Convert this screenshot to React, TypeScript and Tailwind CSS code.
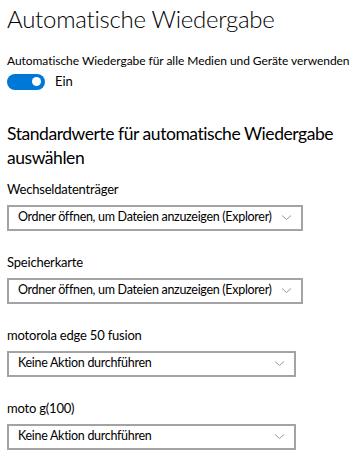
import React from "react";

const Chevron = () => (
  <svg width="11" height="7" viewBox="0 0 11 7" className="shrink-0">
    <path d="M1 1.5 L5.5 5.5 L10 1.5" fill="none" stroke="#999999" strokeWidth="1" />
  </svg>
);

interface DropdownProps {
  label: string;
  value: string;
  width: string;
}

const Dropdown: React.FC<DropdownProps> = ({ label, value, width }) => (
  <div className="flex flex-col">
    <div className="text-[13px] tracking-[-0.2px] leading-[18px] text-black">{label}</div>
    <div
      className={`mt-[7px] h-[26px] ${width} border-2 border-[#a3a3a3] flex items-center justify-between pl-[9px] pr-[9px]`}
    >
      <span className="text-[12.5px] tracking-[-0.3px] text-black whitespace-nowrap">{value}</span>
      <Chevron />
    </div>
  </div>
);

export default function App() {
  const items = [
    { label: "Wechseldatenträger", value: "Ordner öffnen, um Dateien anzuzeigen (Explorer)", width: "w-[296px]" },
    { label: "Speicherkarte", value: "Ordner öffnen, um Dateien anzuzeigen (Explorer)", width: "w-[296px]" },
    { label: "motorola edge 50 fusion", value: "Keine Aktion durchführen", width: "w-[289px]" },
    { label: "moto g(100)", value: "Keine Aktion durchführen", width: "w-[289px]" },
  ];

  return (
    <div className="w-[350px] h-[458px] bg-white overflow-hidden pl-[7px] font-['Lato',sans-serif] text-black">
      <h1 className="text-[24px] tracking-[-0.25px] font-light leading-[34px] pt-[2px] whitespace-nowrap">
        Automatische Wiedergabe
      </h1>
      <div className="mt-[16px] text-[12px] tracking-[-0.05px] leading-[18px] whitespace-nowrap">
        Automatische Wiedergabe für alle Medien und Geräte verwenden
      </div>
      <div className="mt-[2px] flex items-center gap-[10px]">
        <div className="w-[38px] h-[16px] rounded-full bg-[#0078d7] flex items-center justify-end pr-[4px]">
          <div className="w-[9px] h-[9px] rounded-full bg-white" />
        </div>
        <span className="text-[13px]">Ein</span>
      </div>
      <h2 className="mt-[30px] text-[17.5px] tracking-[-0.45px] leading-[24px] w-[343px]">
        Standardwerte für automatische Wiedergabe auswählen
      </h2>
      <div className="mt-[10px] flex flex-col gap-[22px]">
        {items.map((item) => (
          <Dropdown key={item.label} label={item.label} value={item.value} width={item.width} />
        ))}
      </div>
    </div>
  );
}
